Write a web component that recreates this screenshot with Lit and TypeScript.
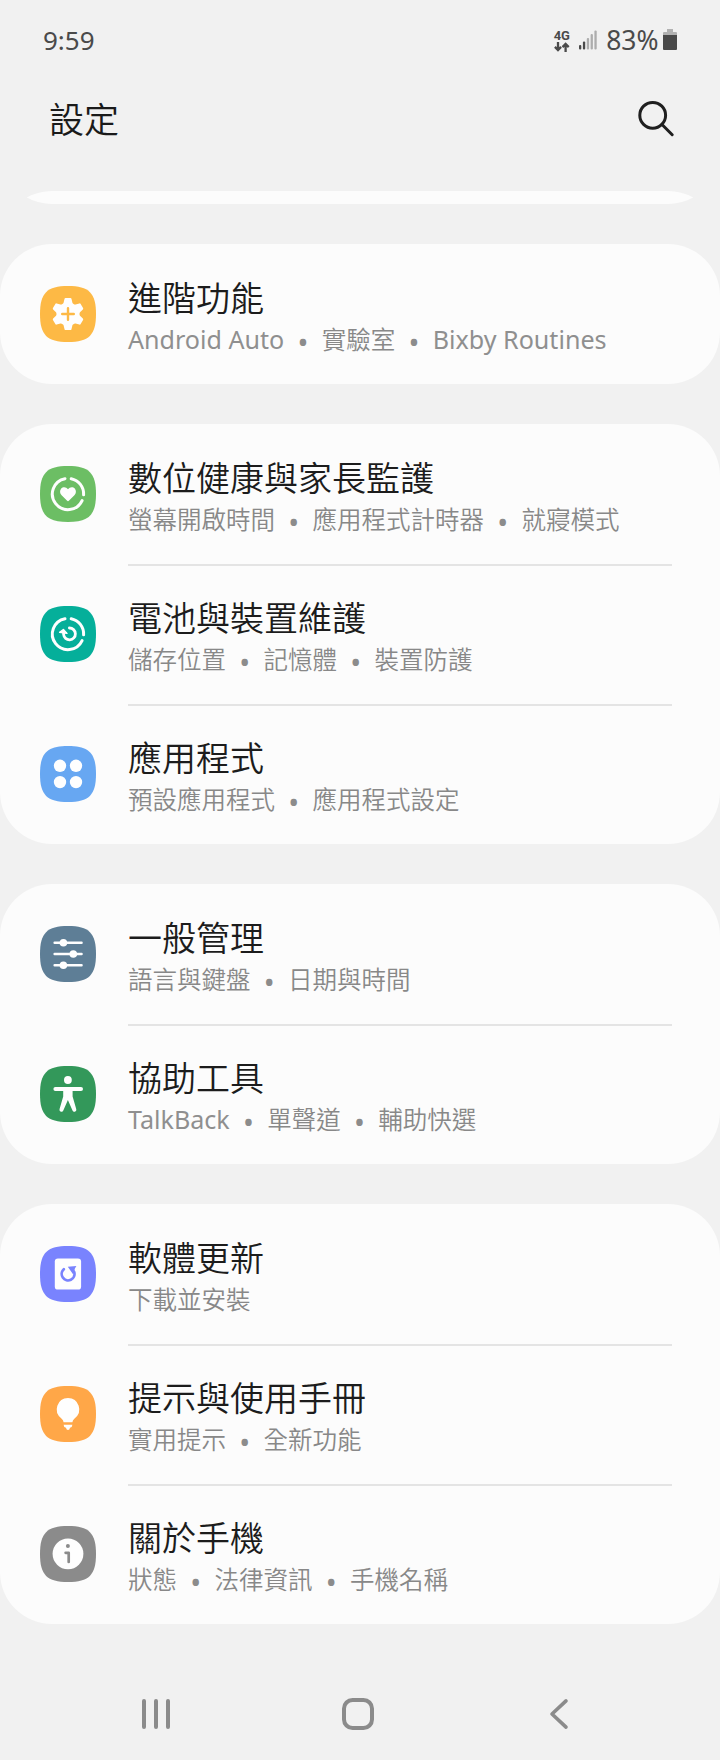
import {LitElement, TemplateResult, css, html, svg} from 'lit';
import {customElement, property} from 'lit/decorators.js';

interface SettingItem {
    icon: string;
    color: string;
    title: string;
    details: string[];
}

const ring = svg`
    <path class="line" stroke-width="3" d="M31.2 12.7A15.6 15.6 0 0 1 43.6 28.8"/>
    <path class="line" stroke-width="3" d="M42.1 34.6A15.6 15.6 0 1 1 25 12.7"/>
`;

const tooth = 'M25.6 13.1H30.4L31.6 18V38L30.4 42.9H25.6L24.4 38V18Z';

const icons: Record<string, TemplateResult> = {
    advanced: svg`
        <circle class="fill" cx="28" cy="28" r="11.6"/>
        <g class="fill rounded">
            <path d=${tooth}/>
            <path d=${tooth} transform="rotate(60 28 28)"/>
            <path d=${tooth} transform="rotate(120 28 28)"/>
        </g>
        <path class="cut" stroke-width="2.4" d="M28 22.2V33.8M22.2 28H33.8"/>`,
    wellbeing: svg`${ring}
        <path class="fill" d="M28 23.3C26.2 20.7 22.9 20.6 21.2 22.6C19.5 24.7 19.8 27.5 21.6 29.2L26.9 34.6Q28 35.7 29.1 34.6L34.4 29.2C36.2 27.5 36.5 24.7 34.8 22.6C33.1 20.6 29.8 20.7 28 23.3Z"/>`,
    care: svg`${ring}
        <path class="line" stroke-width="2.8" d="M29.4 22A5.9 5.9 0 1 1 23.6 28.4V26.5"/>
        <path class="fill rounded thin" d="M19.6 26.4L23.4 23.5L27 27.4Z"/>`,
    apps: svg`
        <g class="fill">
            <circle cx="20" cy="19.8" r="6.2"/><circle cx="36" cy="19.8" r="6.2"/>
            <circle cx="20" cy="36.1" r="6.2"/><circle cx="36" cy="36.1" r="6.2"/>
        </g>`,
    general: svg`
        <path class="line" stroke-width="2.4" d="M14.6 16.7H41.6M14.6 28H41.6M14.6 39.3H41.6"/>
        <g class="fill">
            <circle cx="23.4" cy="16.7" r="3.8"/><circle cx="33.3" cy="28" r="3.8"/><circle cx="23.4" cy="39.3" r="3.8"/>
        </g>`,
    accessibility: svg`
        <circle class="fill" cx="27.9" cy="14" r="3.9"/>
        <path class="line" stroke-width="4" d="M15.4 23H41"/>
        <path class="fill" d="M23.2 22H32.6V30.5L36.3 43.3A2 2 0 0 1 32.5 44.5L27.9 34L23.3 44.5A2 2 0 0 1 19.5 43.3L23.2 30.5Z"/>`,
    update: svg`
        <rect class="fill" x="14.8" y="12.4" width="26.3" height="31.2" rx="3.2"/>
        <path class="cut" stroke-width="2.7" d="M23.8 23.2A6.4 6.4 0 1 0 34.2 26L32 23"/>
        <path class="cut-fill" d="M27.8 20.7L36.4 20L34.9 22.4L33.2 28.6Z"/>`,
    tips: svg`
        <path class="fill" d="M28 12A11.3 11.3 0 0 1 34.6 32.4Q32.6 33.8 32.4 36.2H23.6Q23.4 33.8 21.4 32.4A11.3 11.3 0 0 1 28 12Z"/>
        <path class="fill" d="M23.6 38.7H32.4Q32.3 41.3 30 41.8Q29.6 44 28 44T26 41.8Q23.7 41.3 23.6 38.7Z"/>`,
    about: svg`
        <circle class="fill" cx="28" cy="27.8" r="15.4"/>
        <circle class="cut-fill" cx="27.9" cy="20.1" r="2"/>
        <path class="cut" stroke-width="2.7" d="M25.6 26.8H28.7V36"/>`,
};

const groups: SettingItem[][] = [
    [
        {icon: 'advanced', color: '#fdb945', title: '進階功能', details: ['Android Auto', '實驗室', 'Bixby Routines']},
    ],
    [
        {icon: 'wellbeing', color: '#6cbe64', title: '數位健康與家長監護', details: ['螢幕開啟時間', '應用程式計時器', '就寢模式']},
        {icon: 'care', color: '#05af9a', title: '電池與裝置維護', details: ['儲存位置', '記憶體', '裝置防護']},
        {icon: 'apps', color: '#67a7f2', title: '應用程式', details: ['預設應用程式', '應用程式設定']},
    ],
    [
        {icon: 'general', color: '#5e7e96', title: '一般管理', details: ['語言與鍵盤', '日期與時間']},
        {icon: 'accessibility', color: '#33985a', title: '協助工具', details: ['TalkBack', '單聲道', '輔助快選']},
    ],
    [
        {icon: 'update', color: '#7983fe', title: '軟體更新', details: ['下載並安裝']},
        {icon: 'tips', color: '#ffa748', title: '提示與使用手冊', details: ['實用提示', '全新功能']},
        {icon: 'about', color: '#8b8b8b', title: '關於手機', details: ['狀態', '法律資訊', '手機名稱']},
    ],
];


@customElement('setting-row')
class SettingRow extends LitElement {

    @property({attribute: false})
    item: SettingItem;

    render() {
        const {icon, color, title, details} = this.item;
        return html`
        <svg class="icon" width="56" height="56" viewBox="0 0 56 56" style="color: ${color}">
            <path fill="currentColor" d="M28 0C49 0 56 7 56 28S49 56 28 56 0 49 0 28 7 0 28 0Z"/>
            ${icons[icon]}
        </svg>
        <div class="text">
            <div class="title">${title}</div>
            <div class="details">${details.map((detail, i) => html`${i ? html`<span class="dot">•</span>` : ''}<span class=${/^\w/.test(detail) ? 'latin' : ''}>${detail}</span>`)}</div>
        </div>
        `;
    }

    static styles = css`
        :host {
            display: flex;
            height: 140px;
            box-sizing: border-box;
            padding: 0 48px 0 40px;
            gap: 32px;
        }

        .icon {
            flex: none;
            margin-top: 42px;
        }

        .fill {
            fill: #fefefe;
        }

        .rounded {
            stroke: #fefefe;
            stroke-width: 2.2;
            stroke-linejoin: round;
        }

        .thin {
            stroke-width: 1.4;
        }

        .line {
            fill: none;
            stroke: #fefefe;
            stroke-linecap: round;
        }

        .cut {
            fill: none;
            stroke: currentColor;
            stroke-linecap: round;
            stroke-linejoin: round;
        }

        .cut-fill {
            fill: currentColor;
        }

        .text {
            flex: 1;
            box-sizing: border-box;
            padding-top: 32px;
            white-space: nowrap;
        }

        :host(.divided) .text {
            padding-top: 30px;
            border-top: 2px solid #e4e4e4;
        }

        .title {
            font-size: 34px;
            font-weight: 350;
            line-height: 45px;
            color: #1c1c1c;
        }

        .details {
            font-size: 24.5px;
            font-weight: 350;
            line-height: 37px;
            color: #888;
        }

        .latin {
            font-size: 25.1px;
            font-weight: 400;
            line-height: 0;
            color: #8f8f8f;
        }

        .dot {
            display: inline-block;
            width: 37.5px;
            font-size: 29px;
            font-weight: 400;
            line-height: 0;
            text-align: center;
            vertical-align: -4px;
            color: #8c8c8c;
        }
    `;
}


@customElement('app-root')
class AppRoot extends LitElement {

    render() {
        return html`
        <div class="status">
            <span>9:59</span>
            <div class="status-right">
                <div class="network">
                    <span class="network-type">4G</span>
                    <svg width="16" height="10" viewBox="0 0 16 10" fill="none" stroke="#4a4a4a" stroke-width="2.3">
                        <path d="M4 0V8M.9 4.9L4 8L7.1 4.9M11.6 10V2M8.5 5.1L11.6 2L14.7 5.1"/>
                    </svg>
                </div>
                <svg class="signal" width="18" height="20" viewBox="0 0 18 20">
                    <g fill="#4a4a4a"><rect x="0" y="15" width="2.3" height="4.5" rx="1"/><rect x="3.9" y="11.5" width="2.3" height="8" rx="1"/></g>
                    <g fill="#adadad"><rect x="7.8" y="8" width="2.3" height="11.5" rx="1"/><rect x="11.6" y="4" width="2.3" height="15.5" rx="1"/><rect x="15.4" y="0.6" width="2.3" height="18.9" rx="1"/></g>
                </svg>
                <span class="percent">83%</span>
                <svg class="battery" width="14" height="21" viewBox="0 0 14 21">
                    <path fill="#b2b2b2" d="M4 0H10V3H13Q14 3 14 4V7H0V4Q0 3 1 3H4Z"/>
                    <path fill="#4a4a4a" d="M0 6H14V20Q14 21 13 21H1Q0 21 0 20Z"/>
                </svg>
            </div>
        </div>
        <header class="header">
            <span class="heading">設定</span>
            <svg width="38" height="38" viewBox="0 0 38 38" fill="none" stroke="#1f1f1f" stroke-width="3" stroke-linecap="round">
                <circle cx="15.7" cy="15.3" r="12.9"/><path d="M25 24.5L35.2 34.7"/>
            </svg>
        </header>
        <svg class="edge" width="720" height="13" viewBox="0 0 720 13">
            <path fill="#fcfcfc" d="M52 0H668A52 52 0 0 1 693.2 6.5A52 52 0 0 1 668 13H52A52 52 0 0 1 26.8 6.5A52 52 0 0 1 52 0Z"/>
        </svg>
        <main class="groups">
            ${groups.map(group => html`
                <section class="card">
                    ${group.map((item, i) => html`<setting-row class=${i ? 'divided' : ''} .item=${item}></setting-row>`)}
                </section>
            `)}
        </main>
        <nav class="nav">
            <svg width="36" height="36" viewBox="0 0 36 36"><path d="M6 5V31M18 5V31M30 5V31"/></svg>
            <svg width="36" height="36" viewBox="0 0 36 36"><rect x="4" y="4" width="28" height="28" rx="8.5"/></svg>
            <svg width="36" height="36" viewBox="0 0 36 36"><path stroke-width="3.6" d="M25 4.9L11 18L25 31.1"/></svg>
        </nav>
        `;
    }

    static styles = css`
        :host {
            display: flex;
            flex-direction: column;
            height: 1760px;
            overflow: hidden;
            background-color: #f1f1f1;
            font-family: 'Noto Sans', 'Noto Sans CJK TC', sans-serif;
        }

        .status {
            display: flex;
            justify-content: space-between;
            box-sizing: border-box;
            height: 82px;
            padding: 22px 43px 0;
            font-size: 26px;
            line-height: 37px;
            color: #4a4a4a;
        }

        .status-right {
            display: flex;
            align-items: flex-start;
        }

        .network {
            display: flex;
            flex-direction: column;
            width: 16px;
            margin: 7px 9.5px 0 0;
        }

        .network-type {
            height: 13px;
            font: 700 13px/13px Roboto, sans-serif;
        }

        .signal {
            margin: 8px 9px 0 0;
        }

        .percent {
            font-size: 26.5px;
        }

        .battery {
            margin: 7px 0 0 4.5px;
        }

        .header {
            display: flex;
            align-items: center;
            justify-content: space-between;
            height: 74px;
            padding: 0 45px 0 49px;
            margin-bottom: 35px;
            color: #1a1a1a;
        }

        .heading {
            padding-bottom: 3px;
            font-size: 35px;
            font-weight: 350;
        }

        .edge {
            flex: none;
            margin-bottom: 40px;
        }

        .groups {
            display: flex;
            flex-direction: column;
            gap: 40px;
        }

        .card {
            border-radius: 52px;
            background-color: #fcfcfc;
        }

        .nav {
            display: grid;
            grid-template-columns: repeat(3, 201.5px);
            justify-items: center;
            padding: 72px 0 0 55.3px;
            fill: none;
            stroke: #8b8b8b;
            stroke-width: 4;
            stroke-linecap: round;
            stroke-linejoin: round;
        }
    `;
}
